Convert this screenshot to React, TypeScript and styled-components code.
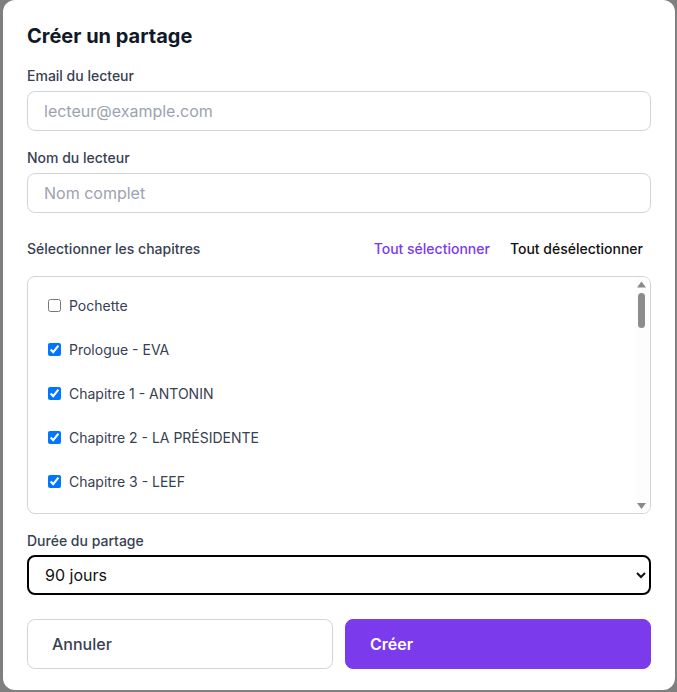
import React from "react";
import styled, { createGlobalStyle } from "styled-components";

const Global = createGlobalStyle`
  html, body { margin: 0; padding: 0; }
  body {
    background: #7f7f7f;
    font-family: Inter, "Noto Sans", "Liberation Sans", sans-serif;
  }
  * { box-sizing: border-box; }
`;

const Backdrop = styled.div`
  height: 692px;
  padding-left: 3px;
  overflow: hidden;
`;

const Dialog = styled.div`
  width: 672px;
  height: 690px;
  background: #ffffff;
  border-radius: 12px;
  padding: 22px 24px 21px;
  display: flex;
  flex-direction: column;
`;

const Title = styled.h2`
  margin: 0;
  font-size: 20px;
  line-height: 28px;
  font-weight: 700;
  color: #111827;
`;

const Field = styled.div<{ $top: number }>`
  margin-top: ${(p) => p.$top}px;
  display: flex;
  flex-direction: column;
`;

const Label = styled.label<{ $gap?: number }>`
  display: block;
  font-size: 14px;
  line-height: 20px;
  font-weight: 500;
  color: #374151;
  margin-bottom: ${(p) => p.$gap ?? 5}px;
`;

const TextInput = styled.input`
  height: 40px;
  width: 100%;
  border: 1px solid #d1d5db;
  border-radius: 8px;
  padding: 0 16px;
  font-family: inherit;
  font-size: 16px;
  color: #111827;
  background: #fff;
  outline: none;
  &::placeholder { color: #9ca3af; }
`;

const ChapterHeader = styled.div`
  margin-top: 26px;
  height: 20px;
  display: flex;
  align-items: center;
  justify-content: space-between;
`;

const HeaderLabel = styled.span`
  font-size: 14px;
  line-height: 20px;
  font-weight: 500;
  color: #374151;
`;

const HeaderActions = styled.div`
  display: flex;
  gap: 4px;
`;

const LinkButton = styled.button<{ $accent?: boolean }>`
  border: none;
  background: transparent;
  padding: 0 8px;
  font-family: inherit;
  font-size: 14px;
  line-height: 20px;
  font-weight: 500;
  color: ${(p) => (p.$accent ? "#7c3aed" : "#111111")};
  cursor: pointer;
`;

const ListBox = styled.div`
  position: relative;
  margin-top: 17px;
  height: 238px;
  border: 1px solid #d1d5db;
  border-radius: 8px;
  overflow: hidden;
`;

const ChapterList = styled.div`
  height: 100%;
  padding: 6px 20px 6px 20px;
`;

const ScrollTrack = styled.svg`
  position: absolute;
  top: 0;
  right: 0;
  width: 15px;
  height: 236px;
`;

const ChapterRow = styled.label`
  height: 44px;
  display: flex;
  align-items: center;
  gap: 8px;
  font-size: 14px;
  color: #374151;
  cursor: pointer;
`;

const Check = styled.input`
  margin: 0;
  width: 13px;
  height: 13px;
`;

const Select = styled.select`
  height: 40px;
  width: 100%;
  border: 2px solid #000000;
  border-radius: 8px;
  padding: 0 10px 0 12px;
  font-family: inherit;
  font-size: 16px;
  color: #111111;
  background: #fff;
  outline: none;
`;

const Actions = styled.div`
  margin-top: 24px;
  display: grid;
  grid-template-columns: 1fr 1fr;
  gap: 12px;
`;

const ActionButton = styled.button<{ $primary?: boolean }>`
  height: 50px;
  border-radius: 8px;
  border: 1px solid ${(p) => (p.$primary ? "#7c3aed" : "#d1d5db")};
  background: ${(p) => (p.$primary ? "#7c3aed" : "#ffffff")};
  color: ${(p) => (p.$primary ? "#ffffff" : "#374151")};
  font-family: inherit;
  font-size: 16px;
  font-weight: ${(p) => (p.$primary ? 600 : 500)};
  text-align: left;
  padding: 0 24px;
  cursor: pointer;
`;

type Chapter = { id: string; title: string; checked: boolean };

const chapters: Chapter[] = [
  { id: "pochette", title: "Pochette", checked: false },
  { id: "prologue", title: "Prologue - EVA", checked: true },
  { id: "ch1", title: "Chapitre 1 - ANTONIN", checked: true },
  { id: "ch2", title: "Chapitre 2 - LA PRÉSIDENTE", checked: true },
  { id: "ch3", title: "Chapitre 3 - LEEF", checked: true },
];

export default function App() {
  return (
    <>
      <Global />
      <Backdrop>
        <Dialog>
          <Title>Créer un partage</Title>
          <Field $top={16}>
            <Label>Email du lecteur</Label>
            <TextInput type="email" placeholder="lecteur@example.com" />
          </Field>
          <Field $top={17}>
            <Label>Nom du lecteur</Label>
            <TextInput type="text" placeholder="Nom complet" />
          </Field>
          <ChapterHeader>
            <HeaderLabel>Sélectionner les chapitres</HeaderLabel>
            <HeaderActions>
              <LinkButton $accent>Tout sélectionner</LinkButton>
              <LinkButton>Tout désélectionner</LinkButton>
            </HeaderActions>
          </ChapterHeader>
          <ListBox>
            <ChapterList>
              {chapters.map((c) => (
                <ChapterRow key={c.id}>
                  <Check type="checkbox" defaultChecked={c.checked} />
                  {c.title}
                </ChapterRow>
              ))}
            </ChapterList>
            <ScrollTrack viewBox="0 0 15 236" aria-hidden="true">
              <rect x="0" y="0" width="15" height="236" fill="#fdfdfd" />
              <polygon points="2,10.5 6.5,4.5 11,10.5" fill="#8a8a8a" />
              <rect x="3" y="16" width="7" height="35" rx="3.5" fill="#8c8c8c" />
              <polygon points="2,226 11,226 6.5,232" fill="#8a8a8a" />
            </ScrollTrack>
          </ListBox>
          <Field $top={17}>
            <Label $gap={4}>Durée du partage</Label>
            <Select defaultValue="90">
              <option value="7">7 jours</option>
              <option value="30">30 jours</option>
              <option value="90">90 jours</option>
              <option value="365">365 jours</option>
            </Select>
          </Field>
          <Actions>
            <ActionButton>Annuler</ActionButton>
            <ActionButton $primary>Créer</ActionButton>
          </Actions>
        </Dialog>
      </Backdrop>
    </>
  );
}
